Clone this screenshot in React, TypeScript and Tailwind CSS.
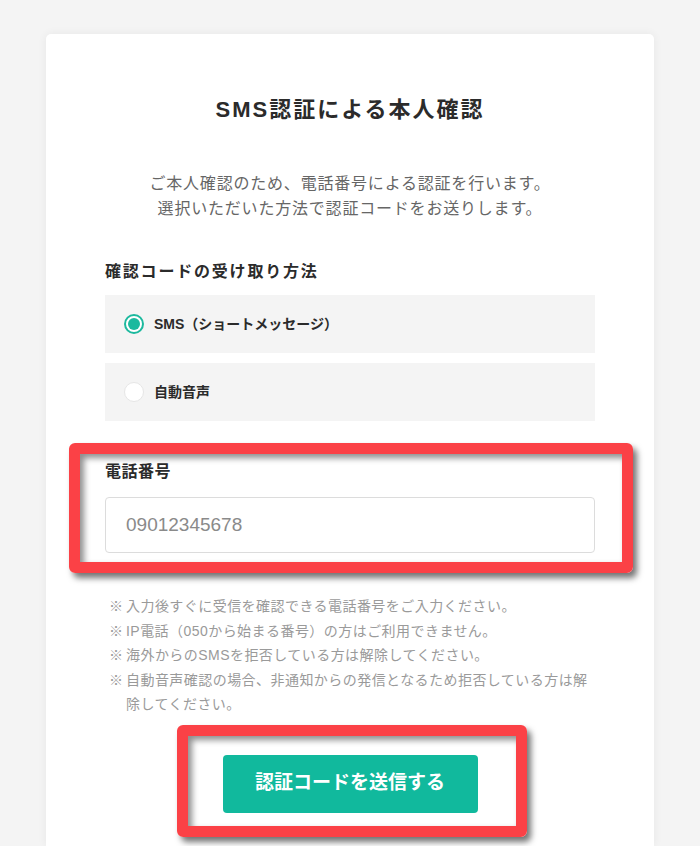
import React, { useState } from 'react';

const FONT = '"Liberation Sans", "Noto Sans CJK JP", sans-serif';

const notes = [
  '入力後すぐに受信を確認できる電話番号をご入力ください。',
  'IP電話（050から始まる番号）の方はご利用できません。',
  '海外からのSMSを拒否している方は解除してください。',
  '自動音声確認の場合、非通知からの発信となるため拒否している方は解除してください。',
];

// 赤枠の注釈
const Highlight: React.FC<{ className: string }> = ({ className }) => (
  <div
    className={`pointer-events-none absolute rounded-[6px] border-[11px] border-[#fb4146] shadow-[4px_5px_6px_rgba(0,0,0,0.55),inset_4px_4px_6px_rgba(0,0,0,0.45)] ${className}`}
  />
);

const App: React.FC = () => {
  const [method, setMethod] = useState<'sms' | 'voice'>('sms');
  const [phone, setPhone] = useState('');

  const options = [
    { id: 'sms' as const, label: 'SMS（ショートメッセージ）' },
    { id: 'voice' as const, label: '自動音声' },
  ];

  return (
    <div className="min-h-[846px] bg-[#f4f4f4] pt-[34px]" style={{ fontFamily: FONT }}>
      <div className="mx-auto min-h-[812px] w-[608px] rounded-t-[5px] bg-white px-[59px] pt-[60px] shadow-[0_0_10px_rgba(0,0,0,0.06)]">
        <h1 className="text-center text-[22px] font-bold leading-[32px] tracking-[2px] text-[#2b2b2b]">
          SMS認証による本人確認
        </h1>

        <p className="mt-[45px] text-center text-[16px] leading-[25px] tracking-[0.8px] text-[#666]">
          ご本人確認のため、電話番号による認証を行います。
          <br />
          選択いただいた方法で認証コードをお送りします。
        </p>

        <div className="mt-[39px] text-[16px] font-bold leading-[24px] tracking-[1.8px] text-[#2b2b2b]">
          確認コードの受け取り方法
        </div>

        <div className="mt-[11px] flex flex-col gap-[10px]">
          {options.map((o) => {
            const checked = method === o.id;
            return (
              <label
                key={o.id}
                className="flex h-[58px] cursor-pointer items-center gap-[10px] bg-[#f4f4f4] pl-[19px]"
                onClick={() => setMethod(o.id)}
              >
                {checked ? (
                  <span className="flex h-[20px] w-[20px] items-center justify-center rounded-full border-2 border-[#1cb99e] bg-white">
                    <span className="h-[12px] w-[12px] rounded-full bg-[#1cb99e]" />
                  </span>
                ) : (
                  <span className="h-[20px] w-[20px] rounded-full border border-[#e6e6e6] bg-white" />
                )}
                <span className="text-[14px] font-bold text-[#2b2b2b]">{o.label}</span>
              </label>
            );
          })}
        </div>

        <div className="relative mt-[39px]">
          <div className="text-[16px] font-bold leading-[24px] tracking-[0.5px] text-[#2b2b2b]">電話番号</div>
          <input
            type="tel"
            value={phone}
            onChange={(e) => setPhone(e.target.value)}
            placeholder="09012345678"
            className="mt-[13px] block h-[56px] w-full rounded-[4px] border border-[#dcdcdc] bg-white px-[20px] text-[19px] text-[#333] outline-none placeholder:text-[#8a8a8a]"
          />
          <Highlight className="-bottom-[20px] -left-[36px] -right-[38px] -top-[17px]" />
        </div>

        <ul className="mt-[41px] pl-[4px] text-[14px] leading-[24.5px] tracking-[0.45px] text-[#9a9a9a]">
          {notes.map((n) => (
            <li key={n} className="flex">
              <span className="w-[17px] shrink-0">※</span>
              <span>{n}</span>
            </li>
          ))}
        </ul>

        <div className="relative mx-auto mt-[38px] w-[255px]">
          <button
            type="button"
            className="block h-[58px] w-full rounded-[4px] bg-[#11b99d] text-[19px] font-bold text-white"
          >
            認証コードを送信する
          </button>
          <Highlight className="-bottom-[24px] -left-[46px] -right-[49px] -top-[30px]" />
        </div>
      </div>
    </div>
  );
};

export default App;
